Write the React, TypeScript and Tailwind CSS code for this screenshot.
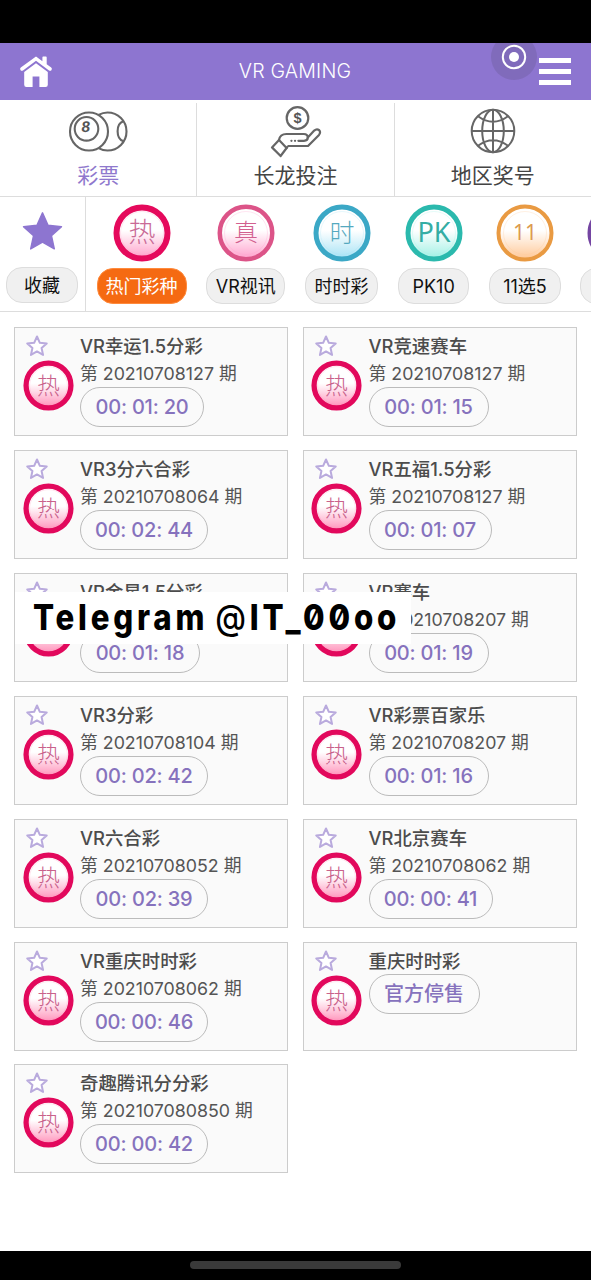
import clsx from "clsx";
import type { ReactNode } from "react";

interface IBadgeProps {
  id: string;
  label: string;
  ring: string;
  glow: string;
  text: string;
  size: number;
  fontSize?: number;
  fontWeight?: number;
  stroke?: number;
}

interface ICategory {
  name: string;
  label: string;
  ring: string;
  glow: string;
  text: string;
  fontSize?: number;
  fontWeight?: number;
  stroke?: number;
  width: string;
  active?: boolean;
}

interface ILottery {
  name: string;
  issue?: string;
  time: string;
  width: string;
}

const CATEGORIES: ICategory[] = [
  { name: "热门彩种", label: "热", ring: "#e5095c", glow: "#ff9fc9", text: "#c96a96", width: "w-[90px]", active: true },
  { name: "VR视讯", label: "真", ring: "#dc5488", glow: "#ffa0cc", text: "#d2608f", fontSize: 24, stroke: 4.5, width: "w-[79px]" },
  { name: "时时彩", label: "时", ring: "#3ba8c6", glow: "#a5e2f5", text: "#55a9bf", fontSize: 25, stroke: 5, width: "w-[73px]" },
  { name: "PK10", label: "PK", ring: "#2bb9ad", glow: "#9ff0e4", text: "#35ada4", fontWeight: 400, stroke: 5, width: "w-[71.5px]" },
  { name: "11选5", label: "11", ring: "#e99a42", glow: "#ffc795", text: "#dc9b50", fontSize: 21, fontWeight: 400, stroke: 4, width: "w-[71.5px]" },
  { name: "快3", label: "快", ring: "#7445a2", glow: "#cdb0ea", text: "#7445a2", width: "w-[71.5px]" },
];

const LOTTERIES: ILottery[] = [
  { name: "VR幸运1.5分彩", issue: "20210708127", time: "00: 01: 20", width: "w-[124px]" },
  { name: "VR竞速赛车", issue: "20210708127", time: "00: 01: 15", width: "w-[120px]" },
  { name: "VR3分六合彩", issue: "20210708064", time: "00: 02: 44", width: "w-[128px]" },
  { name: "VR五福1.5分彩", issue: "20210708127", time: "00: 01: 07", width: "w-[123px]" },
  { name: "VR金星1.5分彩", issue: "20210708207", time: "00: 01: 18", width: "w-[120px]" },
  { name: "VR赛车", issue: "20210708207", time: "00: 01: 19", width: "w-[120px]" },
  { name: "VR3分彩", issue: "20210708104", time: "00: 02: 42", width: "w-[128px]" },
  { name: "VR彩票百家乐", issue: "20210708207", time: "00: 01: 16", width: "w-[120px]" },
  { name: "VR六合彩", issue: "20210708052", time: "00: 02: 39", width: "w-[128px]" },
  { name: "VR北京赛车", issue: "20210708062", time: "00: 00: 41", width: "w-[124px]" },
  { name: "VR重庆时时彩", issue: "20210708062", time: "00: 00: 46", width: "w-[128px]" },
  { name: "重庆时时彩", time: "官方停售", width: "w-[111px]" },
  { name: "奇趣腾讯分分彩", issue: "202107080850", time: "00: 00: 42", width: "w-[128px]" },
];

const STAR =
  "M12 1.6l3.1 6.9 7.5.8-5.6 5 1.6 7.4-6.6-3.8-6.6 3.8 1.6-7.4-5.6-5 7.5-.8z";

function Badge({ id, label, ring, glow, text, size, fontSize = 27, fontWeight = 300, stroke = 6 }: IBadgeProps) {
  return (
    <svg width={size} height={size} viewBox="0 0 58 58" className="shrink-0">
      <defs>
        <linearGradient id={id} x1="0" y1="0" x2="0" y2="1">
          <stop offset="0.1" stopColor="#fff" />
          <stop offset="0.45" stopColor="#fff" />
          <stop offset="1" stopColor={glow} />
        </linearGradient>
      </defs>
      <circle cx="29" cy="29" r={28.5 - stroke / 2} fill={`url(#${id})`} stroke={ring} strokeWidth={stroke} />
      <circle cx="29" cy="29" r="21.5" fill="none" stroke={glow} strokeWidth="0.8" opacity="0.35" />
      <text
        x="29"
        y={29 + fontSize * 0.35}
        textAnchor="middle"
        fontSize={fontSize}
        fontWeight={fontWeight}
        fill={text}
        fontFamily="'Noto Sans', 'Noto Sans CJK SC', sans-serif"
      >
        {label}
      </text>
    </svg>
  );
}

function HomeIcon() {
  return (
    <svg width="34" height="34" viewBox="0 0 34 34" fill="#fff">
      <path d="M17 1.4 1.8 12.6q-1.4 1.2-.2 2.6 1 1.2 2.4.2L17 5.8l13 9.6q1.4 1 2.4-.2 1.2-1.4-.2-2.6l-4.5-3.3V2.4q0-.8-.8-.8h-2.7q-.8 0-.8.8v3.8z" />
      <path d="M17 8.2 5.2 17v12.8q0 2.2 2.2 2.2h6.2V21.4h6.8V32h6.2q2.2 0 2.2-2.2V17z" />
    </svg>
  );
}

function BallsIcon() {
  return (
    <svg width="60" height="42" viewBox="0 0 60 42" fill="none" stroke="#666" strokeWidth="2.1">
      <circle cx="21" cy="21.5" r="19" />
      <circle cx="18.5" cy="18.8" r="11.8" />
      <path d="M30.5 4.9q4.5-2.4 9-2.4a19 19 0 0 1 0 38q-4.5 0-9-2.4" />
      <path d="M55.4 11.2q-5.8 1.9-5.8 10t5.8 10" />
      <text x="18" y="22.4" textAnchor="middle" fontSize="15.5" fontWeight="700" fontFamily="'Liberation Sans', sans-serif" fill="#555" stroke="none" transform="skewX(-6) translate(1.6 0)">
        8
      </text>
    </svg>
  );
}

function HandIcon() {
  return (
    <svg width="52" height="52" viewBox="0 0 52 52" fill="none" stroke="#666" strokeWidth="2.2" strokeLinejoin="round" strokeLinecap="round" className="mt-[2px] ml-[2px]">
      <circle cx="27.5" cy="12" r="10.8" />
      <text x="27.5" y="17.2" textAnchor="middle" fontSize="14.5" fontWeight="700" fontFamily="'Liberation Sans', sans-serif" fill="#555" stroke="none">
        $
      </text>
      <path d="M2 41.4l7-7.4 7.6 8-6 8z" />
      <path d="M9 34q1-6 7.4-6h17.4q4 0 4 3.6l6.4-7q2.6-2.4 5-.4 1.8 2-.2 4.7L38 40H18.6q-1.4.4-2 2" />
      <path d="M37.8 31.6q0 3.2-3.8 3.2h-5.6M25 34.8h.1M21.4 34.8h.1" />
    </svg>
  );
}

function GlobeIcon() {
  return (
    <svg width="46" height="46" viewBox="0 0 46 46" fill="none" stroke="#666" strokeWidth="2">
      <circle cx="23" cy="23" r="21.3" />
      <ellipse cx="23" cy="23" rx="10.8" ry="21.3" />
      <path d="M23 1.5v43M1.5 23h43M8 8.2q15 11 30 0M8 37.8q15-11 30 0" />
    </svg>
  );
}

function NavTab({ icon, label, active }: { icon: ReactNode; label: string; active?: boolean }) {
  return (
    <div className="mt-[3px] flex flex-1 flex-col items-center border-r border-[#ddd] last:border-r-0">
      <div className="flex h-[56px] items-center">{icon}</div>
      <span className={clsx("mt-[2px] text-[21px] leading-[30px]", active ? "text-[#8f78cd]" : "text-[#444]")}>
        {label}
      </span>
    </div>
  );
}

function LotteryCard({ lottery, index }: { lottery: ILottery; index: number }) {
  return (
    <div className="flex h-[109px] border-[1.5px] border-[#ccc] bg-[#fafafa]">
      <div className="flex w-[65px] shrink-0 flex-col pl-[7.5px]">
        <svg width="22" height="22" viewBox="0 0 24 24" className="mt-[7px] ml-[3.5px]" fill="#fff" stroke="#b9aadd" strokeWidth="2.2" strokeLinejoin="round">
          <path d={STAR} />
        </svg>
        <div className="mt-[3px]">
          <Badge id={`hot-${index}`} label="热" ring="#e2085c" glow="#ff8fb8" text="#c9628c" size={51} fontSize={26} />
        </div>
      </div>
      <div className="flex flex-col items-start">
        <h4 className="mt-[5px] text-[18.4px] leading-[26px] font-medium whitespace-nowrap text-[#4c4c4c]">
          {lottery.name}
        </h4>
        {lottery.issue && (
          <p className="pt-px text-[17.8px] leading-[27px] whitespace-nowrap text-[#555]">第 {lottery.issue} 期</p>
        )}
        <div
          className={clsx(
            "flex h-10 items-center justify-center rounded-full border border-[#bbb] text-[20px] font-medium whitespace-nowrap text-[#8672bd]",
            lottery.issue && "tracking-[-0.2px]",
            lottery.width,
          )}
        >
          {lottery.time}
        </div>
      </div>
    </div>
  );
}

export default function App() {
  return (
    <div className="relative flex h-[1280px] w-[591px] flex-col overflow-hidden bg-white font-[Inter,'Noto_Sans_CJK_SC',sans-serif]">
      <div className="h-[43px] shrink-0 bg-black" />

      {/* Header */}
      <header className="relative flex h-[57px] shrink-0 items-center justify-between bg-[#8d75d0] pr-5 pl-[19px]">
        <HomeIcon />
        <h1 className="pt-px pr-[2px] text-[19.6px] font-light tracking-[0.2px] text-white">VR GAMING</h1>
        <div className="flex w-8 flex-col gap-[6px]">
          <span className="h-[5px] bg-white" />
          <span className="h-[5px] bg-white" />
          <span className="h-[5px] bg-white" />
        </div>
        {/* Floating assistive button */}
        <div className="absolute top-0 left-[491px] h-[37px] w-[46px] overflow-hidden">
          <svg width="46" height="46" viewBox="0 0 46 46" className="-mt-[9px]">
            <circle cx="23" cy="23" r="23" fill="#806bbb" />
            <circle cx="23" cy="23" r="11.2" fill="none" stroke="#fff" strokeWidth="2" />
            <circle cx="23" cy="23" r="5" fill="#fff" />
          </svg>
        </div>
      </header>

      {/* Main tabs */}
      <nav className="flex h-[97px] shrink-0 border-b border-[#ddd]">
        <NavTab icon={<BallsIcon />} label="彩票" active />
        <NavTab icon={<HandIcon />} label="长龙投注" />
        <NavTab icon={<GlobeIcon />} label="地区奖号" />
      </nav>

      {/* Categories */}
      <div className="flex h-[115px] shrink-0 overflow-hidden border-b border-[#ddd] text-[18px] text-[#111]">
        <div className="flex w-[86px] shrink-0 flex-col items-center border-r border-[#ddd] pr-px">
          <svg width="43" height="43" viewBox="0 0 24 24" className="mt-[13px]" fill="#8d75d0" stroke="#8d75d0" strokeWidth="0.8" strokeLinejoin="round">
            <path d={STAR} />
          </svg>
          <span className="mt-[14px] flex h-9 w-[72px] items-center justify-center rounded-[16px] border border-[#ddd] bg-[#f0f0f0]">
            收藏
          </span>
        </div>
        <div className="flex gap-[19.8px] pl-[10.5px]">
          {CATEGORIES.map((item, index) => (
            <div key={item.name} className={clsx("flex shrink-0 flex-col items-center pt-[7px]", item.width)}>
              <Badge
                id={`category-${index}`}
                label={item.label}
                ring={item.ring}
                glow={item.glow}
                text={item.text}
                fontSize={item.fontSize}
                fontWeight={item.fontWeight}
                stroke={item.stroke}
                size={58}
              />
              <span
                className={clsx(
                  "mt-[6px] flex h-9 w-full items-center justify-center rounded-[16px] border whitespace-nowrap",
                  item.active ? "border-[#ff8a3c] bg-[#f56a12] text-white" : "border-[#ddd] bg-[#f0f0f0]",
                )}
              >
                {item.name}
              </span>
            </div>
          ))}
        </div>
      </div>

      {/* Lottery list */}
      <main className="grid grid-cols-2 gap-x-[14.5px] gap-y-[13.91px] pt-[15px] pr-[14.5px] pl-[14px]">
        {LOTTERIES.map((lottery, index) => (
          <LotteryCard key={lottery.name} lottery={lottery} index={index} />
        ))}
      </main>

      {/* Contact banner */}
      <div className="absolute top-[592px] left-[15px] flex h-[52px] w-[396px] items-center bg-white pl-[18px] text-black">
        <span className="origin-left scale-x-[0.88] text-[35.5px] font-extrabold tracking-[4.3px] whitespace-nowrap [font-feature-settings:'zero']">
          Telegram <span className="-ml-1 font-medium">@</span>IT_00oo
        </span>
      </div>

      <div className="mt-auto flex h-[29px] shrink-0 justify-center bg-black pt-[10px]">
        <div className="h-2 w-[211px] rounded-full bg-[#3a3a3a]" />
      </div>
    </div>
  );
}
